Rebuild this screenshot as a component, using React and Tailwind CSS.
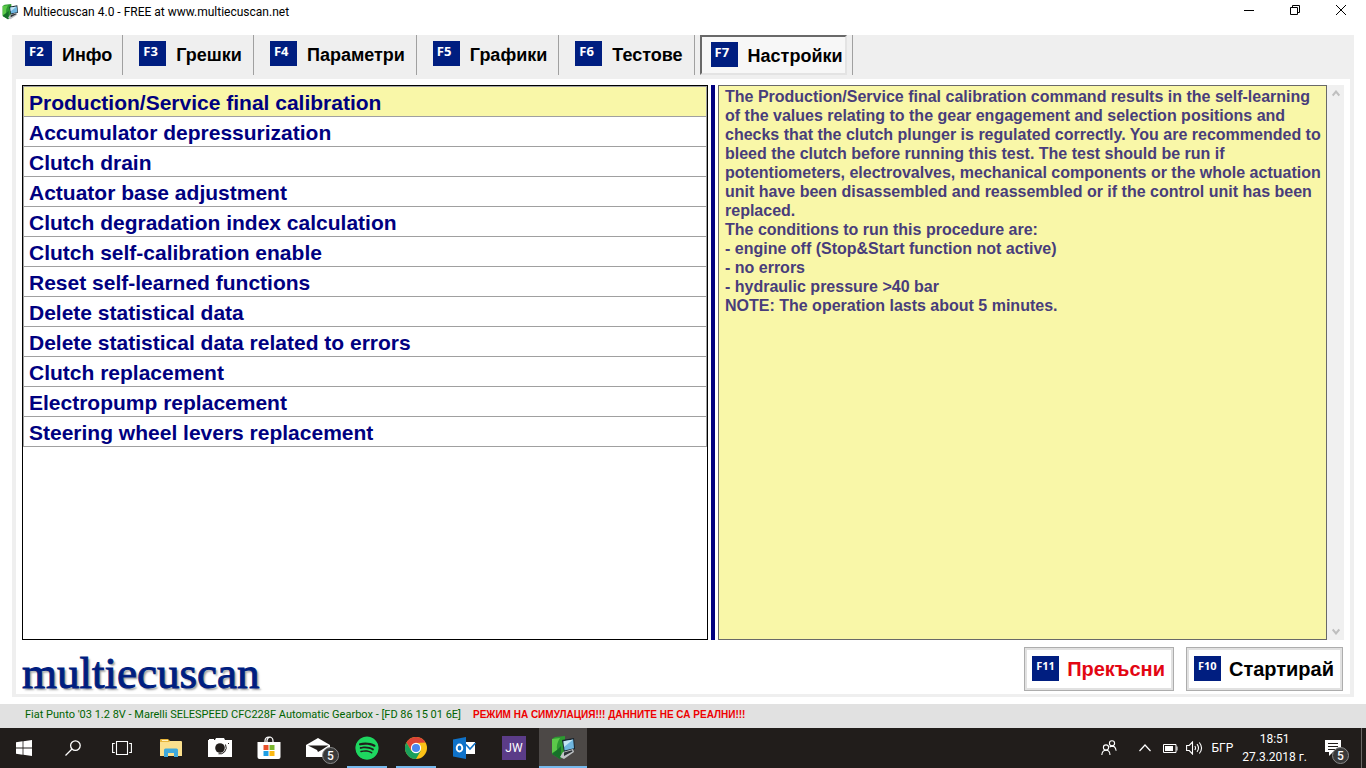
import React, { useState } from 'react';
import { FaSpotify } from 'react-icons/fa';

const tabs = [
  { key: 'F2', label: 'Инфо' },
  { key: 'F3', label: 'Грешки' },
  { key: 'F4', label: 'Параметри' },
  { key: 'F5', label: 'Графики' },
  { key: 'F6', label: 'Тестове' },
  { key: 'F7', label: 'Настройки' },
];

const commands = [
  'Production/Service final calibration',
  'Accumulator depressurization',
  'Clutch drain',
  'Actuator base adjustment',
  'Clutch degradation index calculation',
  'Clutch self-calibration enable',
  'Reset self-learned functions',
  'Delete statistical data',
  'Delete statistical data related to errors',
  'Clutch replacement',
  'Electropump replacement',
  'Steering wheel levers replacement',
];

const AppIcon = ({ className }) => (
  <svg viewBox="0 0 24 24" className={className} aria-hidden="true">
    <path d="M1 3 4 1l10-1v16l-3 6-2 1-8-5z" fill="#2c9a31" />
    <path d="m1 3 8-1q-4 6-3 12l-5 3z" fill="#5cc94a" />
    <path d="m6 14 4-4v12l-1 1-8-5z" fill="#17702a" />
    <path d="m11 4 12-2 1 11-11 3z" fill="#16222c" />
    <path d="m12.500 5.200 9.700-1.600.8 8.600-9.500 2.200z" fill="#6fb6e0" />
    <path d="m12.500 5.200 9.700-1.600L13 11z" fill="#c3e6f5" />
    <path d="m12 16 10-3 1 3-10 7-4-2z" fill="#bfc3c6" />
    <path d="m13 16.500 8-2.200.5 1.200-8.500 4.500z" fill="#2e3338" />
  </svg>
);

const WindowsIcon = () => (
  <svg viewBox="0 0 16 16" className="size-4" fill="#fff" aria-hidden="true">
    <path d="M0 2.2 6.6 1.3v6.2H0zM7.4 1.2 16 0v7.5H7.4zM0 8.4h6.6v6.3L0 13.8zM7.4 8.4H16V16l-8.6-1.2z" />
  </svg>
);

const SearchIcon = () => (
  <svg viewBox="0 0 16 16" className="size-4" fill="none" stroke="#fff" strokeWidth="1.3" aria-hidden="true">
    <circle cx="10.4" cy="5.6" r="4.8" />
    <path d="M7 9 .5 15.5" />
  </svg>
);

const TaskViewIcon = () => (
  <svg viewBox="0 0 20 16" className="h-4 w-5" fill="none" stroke="#fff" strokeWidth="1.1" aria-hidden="true">
    <path d="M4.5 1.5h11v13h-11zM2.8 3.5H.6v9h2.2M17.2 3.5h2.2v9h-2.2" />
  </svg>
);

const FolderIcon = () => (
  <svg viewBox="0 0 22 18" className="h-[18px] w-[22px]" aria-hidden="true">
    <path d="M0 1q0-1 1-1h7l2 2h10q1 0 1 1v3H0z" fill="#e8b63c" />
    <path d="M0 3h9l1-1h11q1 0 1 1v14H0z" fill="#fbe08d" />
    <path d="M2 1h6v1H2z" fill="#fff3c4" />
    <path d="M4 18v-7q0-1.500 1.500-1.500h11q1.500 0 1.500 1.500v7h-4v-4H8v4z" fill="#3fa9dc" />
  </svg>
);

const CameraIcon = () => (
  <svg viewBox="0 0 24 20" className="h-5 w-6" aria-hidden="true">
    <path d="M0 2h1V1h5v1h1l1-2h8l1 2h7v17H0z" fill="#fff" />
    <circle cx="12" cy="10" r="4.8" fill="#211d1b" />
    <path d="M17.500 6.500q2 4-1 7.500-2.500 2.500-6 1.800" fill="none" stroke="#211d1b" />
    <path d="M20 5h1v1h-1z" fill="#211d1b" />
  </svg>
);

const StoreIcon = () => (
  <svg viewBox="0 0 24 24" className="size-6" aria-hidden="true">
    <path d="M8 7V5q0-4 4-4t4 4v2M10 7V4q1-3 3.5-3" fill="none" stroke="#fff" strokeWidth="1.2" />
    <path d="M0.5 6h23v15q0 2-2 2h-19q-2 0-2-2z" fill="#fff" />
    <path d="M6.500 9h5v5h-5z" fill="#e8502a" />
    <path d="M12.500 9h5v5h-5z" fill="#7cb82f" />
    <path d="M6.500 15h5v5h-5z" fill="#1f9fe5" />
    <path d="M12.500 15h5v5h-5z" fill="#fbb812" />
  </svg>
);

const MailIcon = () => (
  <svg viewBox="0 0 24 20" className="h-5 w-6" aria-hidden="true">
    <path d="M0 7 12 0l12 7v12H0z" fill="#fff" />
    <path d="M2 7.500h20.500l-7 4.500-3.500 2-1-2z" fill="#211d1b" />
  </svg>
);

const ChromeIcon = () => (
  <svg viewBox="0 0 24 24" className="size-[22px]" aria-hidden="true">
    <circle cx="12" cy="12" r="12" fill="#fbc116" />
    <path d="M1.600 6A12 12 0 0 1 22.400 6L12 6.500 6.800 15z" fill="#dc4437" />
    <path d="M1.600 6A12 12 0 0 0 12 24l5.200-9L12 17.500 6.800 15z" fill="#1aa05c" />
    <circle cx="12" cy="12" r="5.600" fill="#fff" />
    <circle cx="12" cy="12" r="4.400" fill="#4a87ee" />
  </svg>
);

const OutlookIcon = () => (
  <svg viewBox="0 0 24 22" className="h-[22px] w-6" aria-hidden="true">
    <path d="M12 5h10v12H12z" fill="#fff" />
    <path d="m13 7.500 4 4.500 5.500-6" fill="none" stroke="#0f72c9" strokeWidth="1.600" />
    <path d="M0 2.500 13 0v22L0 19.500z" fill="#0f72c9" />
    <ellipse cx="6.500" cy="11" rx="2.800" ry="3.500" fill="none" stroke="#fff" strokeWidth="1.900" />
  </svg>
);

const PeopleIcon = () => (
  <svg viewBox="0 0 16 16" className="size-4" fill="none" stroke="#fff" strokeWidth="1.100" aria-hidden="true">
    <circle cx="5" cy="7.500" r="2.600" />
    <circle cx="11" cy="3.300" r="2.600" />
    <path d="M.8 15q.4-4.600 4.200-4.700T9 15M8.600 7.200q1-1.100 2.500-1.100 3.500.1 4 4.700" />
  </svg>
);

const BatteryIcon = () => (
  <svg viewBox="0 0 15 9" className="h-[9px] w-[15px]" aria-hidden="true">
    <path d="M.5.500h12.500v8H.5zM14 2.500v4" fill="none" stroke="#fff" />
    <path d="M2 2h8v5H2z" fill="#fff" />
  </svg>
);

const SpeakerIcon = () => (
  <svg viewBox="0 0 17 14" className="h-[14px] w-[17px]" fill="none" stroke="#fff" strokeWidth="1.100" aria-hidden="true">
    <path d="M.6 4.500h2.600L6.500 1v12L3.200 9.500H.6zM8.800 5q1.500 2 0 4M11 3.200q3 3.800 0 7.600M13.300 1.500q4.500 5.500 0 11" />
  </svg>
);

const NoticeIcon = () => (
  <svg viewBox="0 0 16 16" className="size-4" aria-hidden="true">
    <path d="M0 0h16v12H8l-4 4v-4H0z" fill="#fff" />
    <path d="M3 3.500h10M3 6.500h10M3 9.500h7" stroke="#211d1b" />
  </svg>
);

const taskbarApps = [
  { name: 'Start', icon: <WindowsIcon /> },
  { name: 'Search', icon: <SearchIcon /> },
  { name: 'Task view', icon: <TaskViewIcon /> },
  { name: 'File Explorer', icon: <FolderIcon /> },
  { name: 'Camera', icon: <CameraIcon /> },
  { name: 'Store', icon: <StoreIcon /> },
  { name: 'Mail', icon: <MailIcon />, badge: 5 },
  { name: 'Spotify', icon: <FaSpotify className="size-6 rounded-full text-[#1ed760]" />, running: true },
  { name: 'Chrome', icon: <ChromeIcon />, running: true },
  { name: 'Outlook', icon: <OutlookIcon /> },
  {
    name: 'JW Library',
    icon: <span className="grid size-6 place-items-center bg-[#5b3c88] text-xs text-white">JW</span>,
  },
  { name: 'Multiecuscan', icon: <AppIcon className="size-6" />, running: true, active: true },
];

const KeyBadge = ({ children }) => (
  <span
    className={`h-[25px] w-[27px] bg-[#001e80] pl-1 text-left font-['Open_Sans',sans-serif] leading-5 font-bold text-white ${
      children.length > 2 ? 'text-[11px]' : 'text-[13px]'
    }`}
  >
    {children}
  </span>
);

const CountBadge = ({ className, children }) => (
  <span
    className={`absolute bottom-1 grid size-[17px] place-items-center rounded-full border border-[#8a8a8a] bg-[#3a3a3a] text-xs leading-none font-medium text-white ${className}`}
  >
    {children}
  </span>
);

const Tab = ({ tab, active, onSelect }) => (
  <div className="group flex h-10 border-r border-[#a0a0a0] px-[5px]">
    <button
      role="tab"
      aria-selected={active}
      onClick={onSelect}
      className={
        active
          ? 'flex h-10 items-start gap-[10px] border-2 border-t-[#696969] border-r-[#e3e3e3] border-b-[#e3e3e3] border-l-[#696969] bg-[#f7f7f7] pt-[5px] pr-[2px] pl-[9px]'
          : 'flex h-10 items-start gap-[10px] pt-[6px] pr-[6px] pl-[11px] group-first:pr-[5px] group-first:pl-2'
      }
    >
      <KeyBadge>{tab.key}</KeyBadge>
      <span className="pt-[2px] text-lg leading-6 font-bold">{tab.label}</span>
    </button>
  </div>
);

const ActionButton = ({ keyName, label, className }) => (
  <button className="flex h-11 items-start gap-2 border border-[#adadad] bg-white pt-2 pr-2 pl-[7px] shadow-[inset_0_0_0_2px_#e1e1e1]">
    <KeyBadge>{keyName}</KeyBadge>
    <span className={`pt-px text-xl leading-6 font-bold ${className}`}>{label}</span>
  </button>
);

const TitleBar = () => (
  <header className="flex h-[35px] items-start justify-between font-[Roboto,sans-serif]">
    <div className="flex h-6 items-center gap-[5px] pl-[2px]">
      <AppIcon className="size-4" />
      <h1 className="text-xs">Multiecuscan 4.0 - FREE at www.multiecuscan.net</h1>
    </div>
    <div className="flex h-5 pr-[2px]">
      <button aria-label="Minimize" className="grid w-[46px] place-items-center">
        <svg viewBox="0 0 10 10" className="size-[10px]" stroke="#000"><path d="M0 5.500h10" /></svg>
      </button>
      <button aria-label="Restore" className="grid w-[46px] place-items-center">
        <svg viewBox="0 0 10 10" className="size-[10px]" fill="none" stroke="#000">
          <path d="M.5 2.500h7v7h-7zM2.500 2.500v-2h7v7h-2" />
        </svg>
      </button>
      <button aria-label="Close" className="grid w-[46px] place-items-center">
        <svg viewBox="0 0 10 10" className="size-[10px]" stroke="#000"><path d="m0 0 10 10M10 0 0 10" /></svg>
      </button>
    </div>
  </header>
);

const Description = () => (
  <div className="flex">
    <section className="flex-1 border border-[#696969] bg-[#f9f7a8] pt-px pr-px pl-[6px] text-base leading-[19px] font-bold text-[#483d7b]">
      <p>
        The Production/Service final calibration command results in the self-learning of the values relating to the
        gear engagement and selection positions and checks that the clutch plunger is regulated correctly. You are
        recommended to bleed the clutch before running this test. The test should be run if potentiometers,
        electrovalves, mechanical components or the whole actuation unit have been disassembled and reassembled or if
        the control unit has been replaced.
      </p>
      <p>The conditions to run this procedure are:</p>
      <p>- engine off (Stop&amp;Start function not active)</p>
      <p>- no errors</p>
      <p>- hydraulic pressure &gt;40 bar</p>
      <p>NOTE: The operation lasts about 5 minutes.</p>
    </section>
    <div className="flex w-[17px] flex-col items-center justify-between bg-[#f0f0f0] py-[5px]">
      <svg viewBox="0 0 8 7" className="h-[7px] w-2" fill="none" stroke="#bfbfbf" strokeWidth="2"><path d="m.7 5.500 3.300-4 3.300 4" /></svg>
      <svg viewBox="0 0 8 7" className="h-[7px] w-2" fill="none" stroke="#bfbfbf" strokeWidth="2"><path d="m.7 1.500 3.300 4 3.300-4" /></svg>
    </div>
  </div>
);

const Taskbar = () => (
  <footer className="flex h-10 justify-between bg-[#211d1b] font-[Roboto,sans-serif] text-white">
    <nav className="flex">
      {taskbarApps.map((app) => (
        <button
          key={app.name}
          aria-label={app.name}
          className={`relative mr-px grid w-12 place-items-center ${app.active ? 'bg-[#4c4846]' : ''}`}
        >
          {app.icon}
          {app.badge && <CountBadge className="right-[3px]">{app.badge}</CountBadge>}
          {app.running && (
            <span className={`absolute bottom-0 h-[2px] bg-[#76b9ed] ${app.active ? 'inset-x-0' : 'inset-x-1'}`} />
          )}
        </button>
      ))}
    </nav>
    <div className="flex items-center">
      <button aria-label="People" className="mr-[22px]"><PeopleIcon /></button>
      <button aria-label="Show hidden icons" className="mr-3">
        <svg viewBox="0 0 12 8" className="h-2 w-3" fill="none" stroke="#fff" strokeWidth="1.200"><path d="m.5 7 5.500-6 5.500 6" /></svg>
      </button>
      <button aria-label="Battery" className="mr-2"><BatteryIcon /></button>
      <button aria-label="Volume" className="mr-2"><SpeakerIcon /></button>
      <button className="mr-[9px] text-xs">БГР</button>
      <button className="mr-[2px] text-center text-xs leading-[18px]">
        <span className="block">18:51</span>
        <span className="block">27.3.2018 г.</span>
      </button>
      <button aria-label="Notifications" className="relative grid h-10 w-10 items-center pl-4">
        <NoticeIcon />
        <CountBadge className="right-0">5</CountBadge>
      </button>
      <span className="ml-3 h-10 w-[5px] border-l border-[#6b6866]" />
    </div>
  </footer>
);

export default function App() {
  const [activeTab, setActiveTab] = useState('F7');
  const [selected, setSelected] = useState(0);

  return (
    <div className="flex min-h-screen flex-col bg-white font-['Liberation_Sans',Arial,sans-serif] text-black">
      <TitleBar />

      <main className="mx-3 mb-[7px] flex flex-1 flex-col bg-[#efefef] px-1 pb-[3px]">
        <div role="tablist" className="-ml-1 flex h-11">
          {tabs.map((tab) => (
            <Tab key={tab.key} tab={tab} active={tab.key === activeTab} onSelect={() => setActiveTab(tab.key)} />
          ))}
        </div>

        <div className="flex flex-1 flex-col bg-white px-[6px] pt-[6px] pb-[3px]">
          <div className="grid flex-1 grid-cols-[686fr_4px_626fr] gap-x-[3px]">
            <ul className="border border-black">
              {commands.map((command, i) => (
                <li key={command} className="border-x border-b border-[#a0a0a0] first:border-t">
                  <button
                    onClick={() => setSelected(i)}
                    className={`block h-[29px] w-full pl-[5px] text-left text-[21px] leading-8 font-bold text-[#000080] ${
                      i === selected ? 'bg-[#f9f7a8]' : 'bg-white'
                    }`}
                  >
                    {command}
                  </button>
                </li>
              ))}
            </ul>
            <div className="bg-[#000080]" />
            <Description />
          </div>

          <div className="flex items-start justify-between pt-[7px]">
            <div className="h-11 font-['Liberation_Serif',serif] text-[45px] leading-[52px] text-[#001e80] [-webkit-text-stroke:1px_#001e80] [text-shadow:2px_2px_2px_rgba(0,0,0,0.4)]">
              multiecuscan
            </div>
            <div className="flex gap-3 pr-px">
              <ActionButton keyName="F11" label="Прекъсни" className="text-[#e30613]" />
              <ActionButton keyName="F10" label="Стартирай" className="text-black" />
            </div>
          </div>
        </div>
      </main>

      <div className="flex h-6 gap-3 bg-[#e1e1e1] pl-[25px] leading-[21px]">
        <span className="font-[Roboto,sans-serif] text-[11px] text-[#006400]">
          Fiat Punto '03 1.2 8V - Marelli SELESPEED CFC228F Automatic Gearbox - [FD 86 15 01 6E]
        </span>
        <span className="text-[10px] font-bold text-[#ee0000]">РЕЖИМ НА СИМУЛАЦИЯ!!! ДАННИТЕ НЕ СА РЕАЛНИ!!!</span>
      </div>
      <Taskbar />
    </div>
  );
}
